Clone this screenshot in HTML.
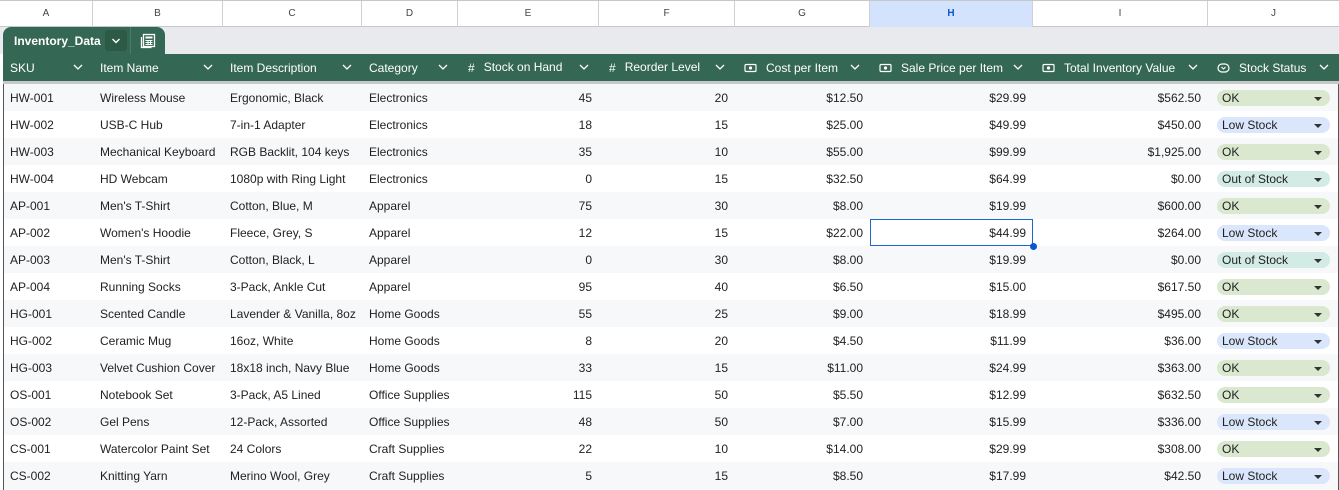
<!DOCTYPE html><html><head><style>
*{margin:0;padding:0;box-sizing:border-box}
body{width:1339px;height:490px;overflow:hidden;background:#fff;font-family:"Liberation Sans",Arial,sans-serif;font-size:12px;color:#1f1f1f;position:relative}
.colh{position:absolute;top:0;left:0;height:27px;width:1339px;border-top:1px solid #c7c7c7;border-bottom:1px solid #c7c7c7;background:#fff}
.colh div{position:absolute;top:0;height:26px;line-height:25px;text-align:center;font-size:10px;color:#444;border-right:1px solid #d0d0d0}
.tabrow{position:absolute;top:27px;left:0;width:1339px;height:27px;background:#e9eaee}
.tab{position:absolute;left:3px;top:0;width:162px;height:27px;background:#356854;border-radius:8px 8px 0 0;color:#fff;font-weight:bold;font-size:12px}
table{position:absolute;left:3px;top:54px;border-collapse:collapse;table-layout:fixed;width:1336px}
th{background:#356854;color:#fff;height:27px;text-align:left;font-weight:normal;font-size:12px;padding:0 0 0 7px;white-space:nowrap;position:relative}
th .c{position:absolute;right:10px;top:7px}
td{height:27px;padding:0 7px;white-space:nowrap;overflow:hidden}
tr.g td{height:3px;padding:0;background:#c8c8c8}
tbody tr:nth-child(odd) td{background:#f6f8fa}
td.r{text-align:right;padding-right:7px}
.p{display:block;height:16px;line-height:17px;border-radius:8px;padding-left:5px;position:relative;margin-left:2px;margin-right:2px}
.p:after{content:"";position:absolute;right:8px;top:7px;border:4px solid transparent;border-top:4px solid #333;border-bottom:0}
.ok{background:#d9e8cf}.lo{background:#dae6fb}.os{background:#d3ebe5}
.ic{display:inline-block;margin-right:9px;margin-left:2px;vertical-align:middle}
</style></head><body>
<div class="colh">
<div style="left:0;width:93px">A</div><div style="left:93px;width:130px">B</div><div style="left:223px;width:139px">C</div><div style="left:362px;width:96px">D</div><div style="left:458px;width:141px">E</div><div style="left:599px;width:136px">F</div><div style="left:735px;width:135px">G</div><div style="left:870px;width:163px;background:#d3e3fd;color:#0b57d0;font-weight:bold">H</div><div style="left:1033px;width:175px">I</div><div style="left:1208px;width:131px;border-right:0">J</div>
</div>
<div class="tabrow"><div class="tab">
<span style="position:absolute;left:11px;top:7px">Inventory_Data</span>
<span style="position:absolute;left:102px;top:3px;width:22px;height:21px;background:#2c5a47;border-radius:3px"><svg width="22" height="21" viewBox="0 0 22 21"><path d="M7.5 9l3.5 3.5L14.5 9" stroke="#fff" stroke-width="1.4" fill="none"/></svg></span>
<span style="position:absolute;left:127px;top:0;width:1px;height:27px;background:#4d7c68"></span>
<svg style="position:absolute;left:137px;top:6px" width="16" height="16" viewBox="0 0 16 16"><rect x="3.5" y="1.5" width="11" height="12" fill="none" stroke="#fff" stroke-width="1.3"/><path d="M1.5 4v10.5h10" fill="none" stroke="#fff" stroke-width="1.3"/><rect x="5.5" y="3.5" width="7" height="2" fill="#fff"/><path d="M5.5 7.5h7M5.5 9.5h7M5.5 11.5h7M8 7v5M10.5 7v5" stroke="#fff" stroke-width="1"/></svg>
</div></div>
<table>
<colgroup><col style="width:90px"><col style="width:130px"><col style="width:139px"><col style="width:96px"><col style="width:141px"><col style="width:136px"><col style="width:135px"><col style="width:163px"><col style="width:175px"><col style="width:131px"></colgroup>
<thead>
<tr>
<th>SKU<svg class="c" width="10" height="12"><path d="M1 4l4 4 4-4" stroke="#fff" stroke-width="1.3" fill="none"/></svg></th>
<th>Item Name<svg class="c" width="10" height="12"><path d="M1 4l4 4 4-4" stroke="#fff" stroke-width="1.3" fill="none"/></svg></th>
<th>Item Description<svg class="c" width="10" height="12"><path d="M1 4l4 4 4-4" stroke="#fff" stroke-width="1.3" fill="none"/></svg></th>
<th>Category<svg class="c" width="10" height="12"><path d="M1 4l4 4 4-4" stroke="#fff" stroke-width="1.3" fill="none"/></svg></th>
<th><span class="ic" style="margin-left:3px">#</span>Stock on Hand<svg class="c" width="10" height="12"><path d="M1 4l4 4 4-4" stroke="#fff" stroke-width="1.3" fill="none"/></svg></th>
<th><span class="ic" style="margin-left:3px">#</span>Reorder Level<svg class="c" width="10" height="12"><path d="M1 4l4 4 4-4" stroke="#fff" stroke-width="1.3" fill="none"/></svg></th>
<th><svg class="ic" width="13" height="10" viewBox="0 0 13 10"><rect x="1" y="1.5" width="11" height="7" rx="1" fill="none" stroke="#fff" stroke-width="1.2"/><circle cx="6.5" cy="5" r="1.6" fill="#fff"/></svg>Cost per Item<svg class="c" width="10" height="12"><path d="M1 4l4 4 4-4" stroke="#fff" stroke-width="1.3" fill="none"/></svg></th>
<th><svg class="ic" width="13" height="10" viewBox="0 0 13 10"><rect x="1" y="1.5" width="11" height="7" rx="1" fill="none" stroke="#fff" stroke-width="1.2"/><circle cx="6.5" cy="5" r="1.6" fill="#fff"/></svg>Sale Price per Item<svg class="c" width="10" height="12"><path d="M1 4l4 4 4-4" stroke="#fff" stroke-width="1.3" fill="none"/></svg></th>
<th><svg class="ic" width="13" height="10" viewBox="0 0 13 10"><rect x="1" y="1.5" width="11" height="7" rx="1" fill="none" stroke="#fff" stroke-width="1.2"/><circle cx="6.5" cy="5" r="1.6" fill="#fff"/></svg>Total Inventory Value<svg class="c" width="10" height="12"><path d="M1 4l4 4 4-4" stroke="#fff" stroke-width="1.3" fill="none"/></svg></th>
<th><svg class="ic" width="13" height="10" viewBox="0 0 13 10"><rect x="1" y="1" width="11" height="8" rx="4" fill="none" stroke="#fff" stroke-width="1.2"/><path d="M4.5 4l2 2 2-2" stroke="#fff" stroke-width="1.1" fill="none"/></svg>Stock Status<svg class="c" width="10" height="12"><path d="M1 4l4 4 4-4" stroke="#fff" stroke-width="1.3" fill="none"/></svg></th>
</tr>
<tr class="g"><td colspan="10"></td></tr>
</thead>
<tbody>
<tr><td>HW-001</td><td>Wireless Mouse</td><td>Ergonomic, Black</td><td>Electronics</td><td class="r">45</td><td class="r">20</td><td class="r">$12.50</td><td class="r">$29.99</td><td class="r">$562.50</td><td><span class="p ok">OK</span></td></tr>
<tr><td>HW-002</td><td>USB-C Hub</td><td>7-in-1 Adapter</td><td>Electronics</td><td class="r">18</td><td class="r">15</td><td class="r">$25.00</td><td class="r">$49.99</td><td class="r">$450.00</td><td><span class="p lo">Low Stock</span></td></tr>
<tr><td>HW-003</td><td>Mechanical Keyboard</td><td>RGB Backlit, 104 keys</td><td>Electronics</td><td class="r">35</td><td class="r">10</td><td class="r">$55.00</td><td class="r">$99.99</td><td class="r">$1,925.00</td><td><span class="p ok">OK</span></td></tr>
<tr><td>HW-004</td><td>HD Webcam</td><td>1080p with Ring Light</td><td>Electronics</td><td class="r">0</td><td class="r">15</td><td class="r">$32.50</td><td class="r">$64.99</td><td class="r">$0.00</td><td><span class="p os">Out of Stock</span></td></tr>
<tr><td>AP-001</td><td>Men's T-Shirt</td><td>Cotton, Blue, M</td><td>Apparel</td><td class="r">75</td><td class="r">30</td><td class="r">$8.00</td><td class="r">$19.99</td><td class="r">$600.00</td><td><span class="p ok">OK</span></td></tr>
<tr><td>AP-002</td><td>Women's Hoodie</td><td>Fleece, Grey, S</td><td>Apparel</td><td class="r">12</td><td class="r">15</td><td class="r">$22.00</td><td class="r" style="outline:1px solid #1a66d2;outline-offset:-1px;position:relative;overflow:visible">$44.99<span style="position:absolute;right:-4px;bottom:-4px;width:7px;height:7px;border-radius:50%;background:#0b57d0;z-index:2"></span></td><td class="r">$264.00</td><td><span class="p lo">Low Stock</span></td></tr>
<tr><td>AP-003</td><td>Men's T-Shirt</td><td>Cotton, Black, L</td><td>Apparel</td><td class="r">0</td><td class="r">30</td><td class="r">$8.00</td><td class="r">$19.99</td><td class="r">$0.00</td><td><span class="p os">Out of Stock</span></td></tr>
<tr><td>AP-004</td><td>Running Socks</td><td>3-Pack, Ankle Cut</td><td>Apparel</td><td class="r">95</td><td class="r">40</td><td class="r">$6.50</td><td class="r">$15.00</td><td class="r">$617.50</td><td><span class="p ok">OK</span></td></tr>
<tr><td>HG-001</td><td>Scented Candle</td><td>Lavender &amp; Vanilla, 8oz</td><td>Home Goods</td><td class="r">55</td><td class="r">25</td><td class="r">$9.00</td><td class="r">$18.99</td><td class="r">$495.00</td><td><span class="p ok">OK</span></td></tr>
<tr><td>HG-002</td><td>Ceramic Mug</td><td>16oz, White</td><td>Home Goods</td><td class="r">8</td><td class="r">20</td><td class="r">$4.50</td><td class="r">$11.99</td><td class="r">$36.00</td><td><span class="p lo">Low Stock</span></td></tr>
<tr><td>HG-003</td><td>Velvet Cushion Cover</td><td>18x18 inch, Navy Blue</td><td>Home Goods</td><td class="r">33</td><td class="r">15</td><td class="r">$11.00</td><td class="r">$24.99</td><td class="r">$363.00</td><td><span class="p ok">OK</span></td></tr>
<tr><td>OS-001</td><td>Notebook Set</td><td>3-Pack, A5 Lined</td><td>Office Supplies</td><td class="r">115</td><td class="r">50</td><td class="r">$5.50</td><td class="r">$12.99</td><td class="r">$632.50</td><td><span class="p ok">OK</span></td></tr>
<tr><td>OS-002</td><td>Gel Pens</td><td>12-Pack, Assorted</td><td>Office Supplies</td><td class="r">48</td><td class="r">50</td><td class="r">$7.00</td><td class="r">$15.99</td><td class="r">$336.00</td><td><span class="p lo">Low Stock</span></td></tr>
<tr><td>CS-001</td><td>Watercolor Paint Set</td><td>24 Colors</td><td>Craft Supplies</td><td class="r">22</td><td class="r">10</td><td class="r">$14.00</td><td class="r">$29.99</td><td class="r">$308.00</td><td><span class="p ok">OK</span></td></tr>
<tr><td>CS-002</td><td>Knitting Yarn</td><td>Merino Wool, Grey</td><td>Craft Supplies</td><td class="r">5</td><td class="r">15</td><td class="r">$8.50</td><td class="r">$17.99</td><td class="r">$42.50</td><td><span class="p lo">Low Stock</span></td></tr>
</tbody></table>
<div style="position:absolute;left:3px;top:84px;width:1px;height:406px;background:#555"></div>
<div style="position:absolute;right:0;top:84px;width:1px;height:406px;background:#555"></div>
</body></html>
